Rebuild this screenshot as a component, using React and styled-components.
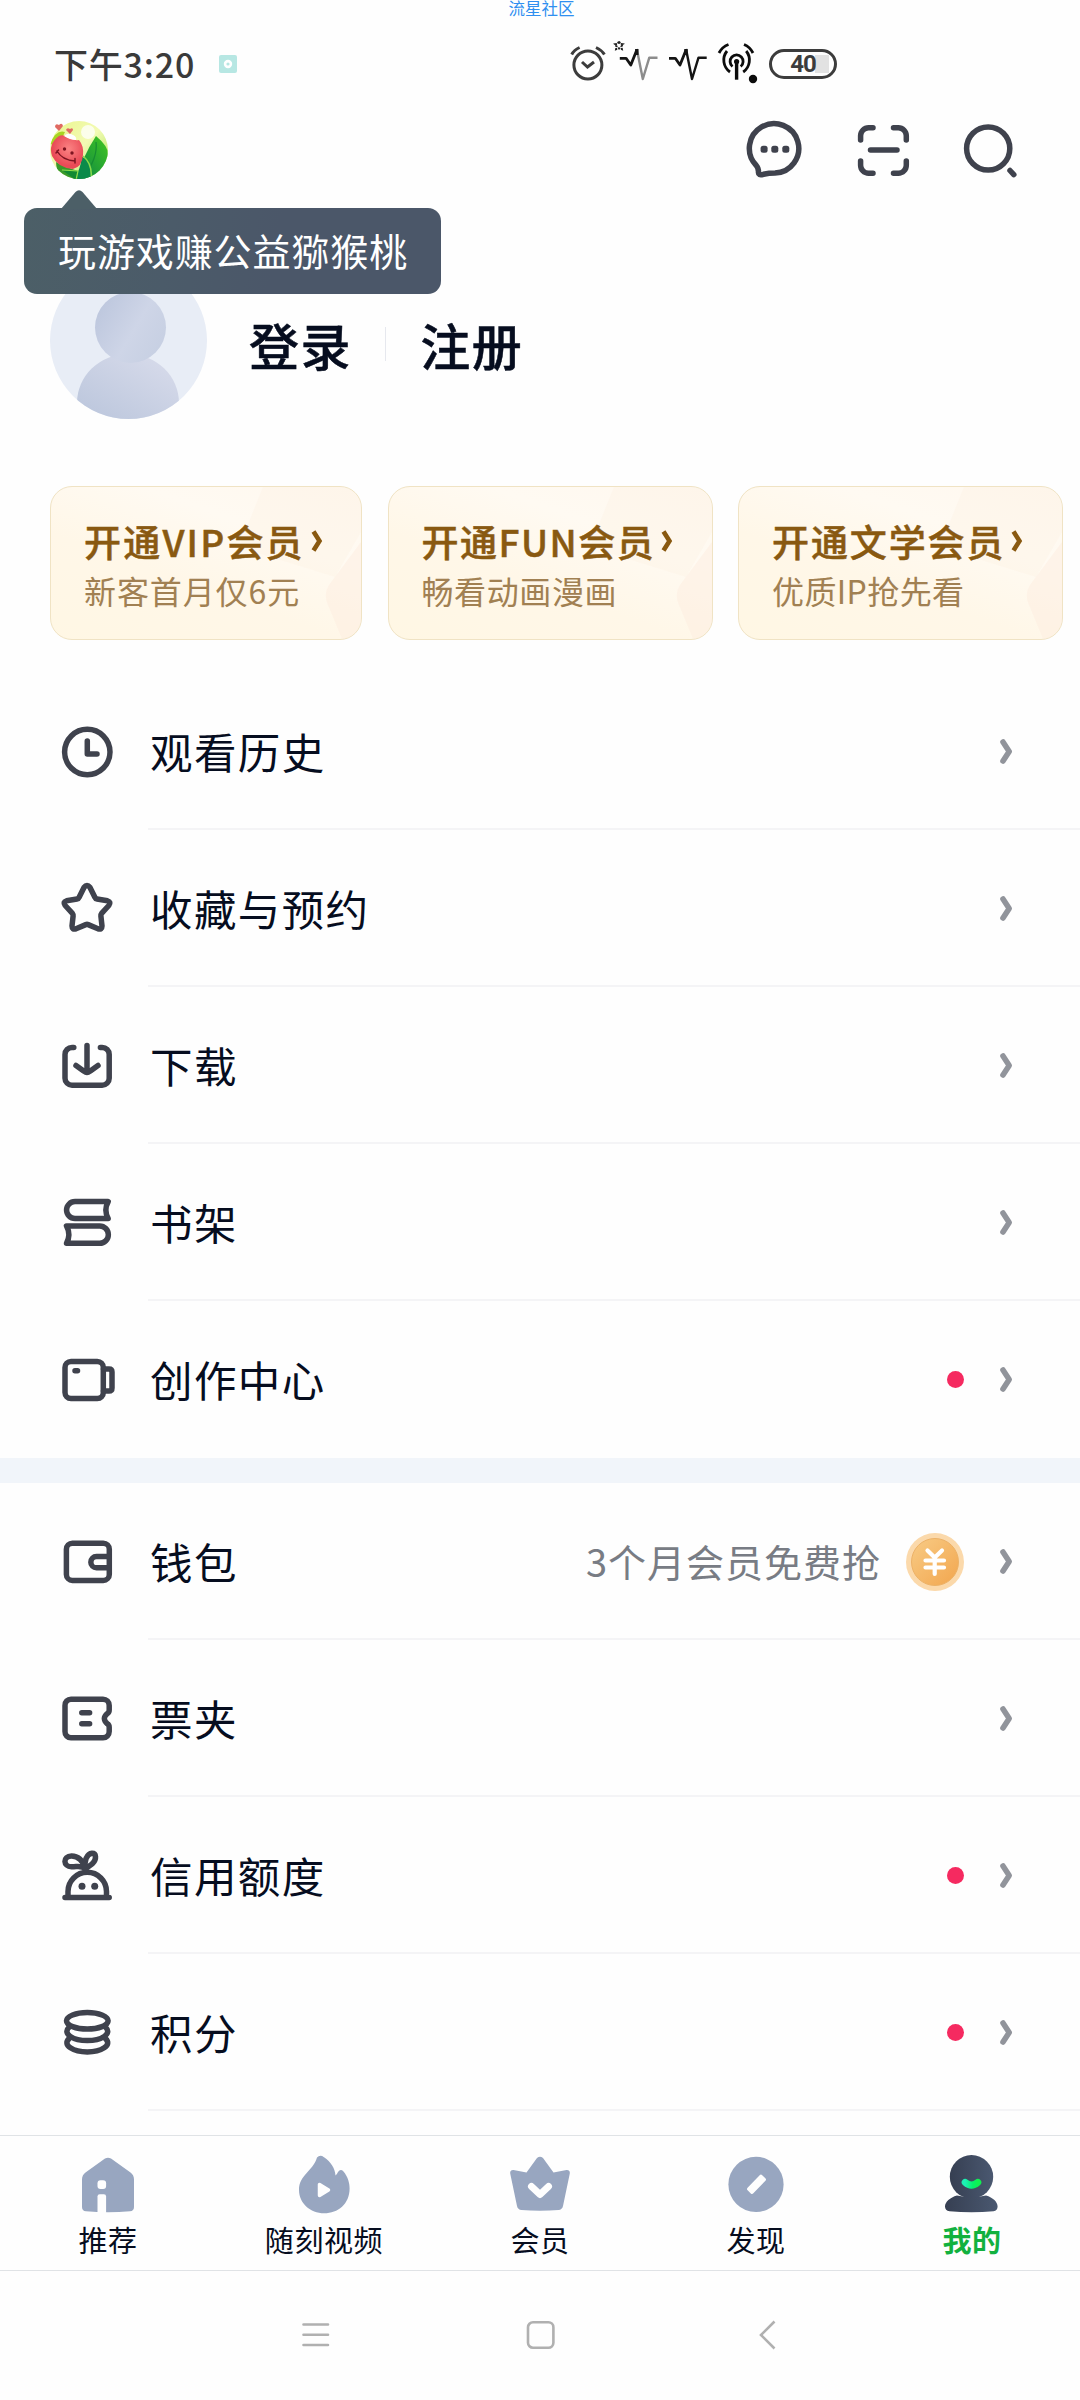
import React from 'react'
import styled, { createGlobalStyle } from 'styled-components'

const GlobalStyle = createGlobalStyle`
    * {
        box-sizing: border-box;
    }
    body {
        margin: 0;
        background: #fefefe;
        font-family: 'Noto Sans CJK SC', 'Noto Sans', sans-serif;
    }
    svg {
        display: block;
        flex-shrink: 0;
        overflow: visible;
    }
`
const Page = styled.div`
    position: relative;
    display: flex;
    flex-direction: column;
    width: 1080px;
    height: 2400px;
    overflow: hidden;
    background: #fefefe;
    color: #060d1f;
    white-space: nowrap;
`
const Watermark = styled.div`
    position: absolute;
    top: 0;
    left: 0;
    width: 1083px;
    text-align: center;
    font-size: 16.5px;
    line-height: 17px;
    color: #2f8ff0;
`
const StatusBar = styled.div`
    display: flex;
    align-items: center;
    height: 120px;
    padding: 8px 243px 0 54px;
`
const Clock = styled.div`
    width: 165px;
    padding-bottom: 2px;
    font-size: 34px;
    font-weight: 500;
    letter-spacing: 0.8px;
    color: #3a3a3a;
`
const StatusIcons = styled.div`
    display: flex;
    align-items: center;
    gap: 11px;
    margin-left: auto;
`
const Battery = styled.div`
    display: flex;
    align-items: center;
    justify-content: center;
    width: 68px;
    height: 30px;
    border: 3px solid #3c3c3c;
    border-radius: 15px;
    font-family: Roboto, sans-serif;
    font-size: 24px;
    font-weight: 700;
    letter-spacing: -1px;
    color: #3c3c3c;
    background: linear-gradient(#e2e2e2, #e2e2e2) 43px 3px / 14px 18px no-repeat;
`
const Header = styled.div`
    position: relative;
    display: flex;
    align-items: center;
    justify-content: space-between;
    height: 60px;
    padding: 0 60px 0 50px;
`
const HeaderActions = styled.div`
    display: flex;
    gap: 47.5px;
`
const Tooltip = styled.div`
    position: absolute;
    z-index: 2;
    top: 88px;
    left: 24px;
    width: 417px;
    height: 86px;
    padding-left: 34px;
    border-radius: 13px;
    background: linear-gradient(100deg, #4c5f67 0%, #4b5b69 35%, #4b5769 60%);
    color: #fff;
    font-size: 38px;
    letter-spacing: 0.9px;
    line-height: 84px;
`
const TooltipArrow = styled.svg`
    position: absolute;
    top: -18px;
    left: 37px;
`
const Profile = styled.div`
    display: flex;
    height: 157px;
    margin: 82px 0 0 50px;
`
const ProfileLinks = styled.div`
    display: flex;
    align-items: center;
    padding: 7px 0 0 42px;
    font-size: 50px;
    font-weight: 500;
    letter-spacing: 1.6px;
    -webkit-text-stroke: 0.5px #060d1f;
`
const Separator = styled.div`
    width: 1px;
    height: 34px;
    margin: 0 34px 0 33px;
    background: #e6e8ee;
`
const Cards = styled.div`
    display: flex;
    gap: 25.5px;
    margin: 67px 0 0 50px;
`
const Card = styled.div`
    position: relative;
    flex-shrink: 0;
    width: ${ props => props.$width }px;
    height: 154px;
    padding: 32px 0 0 33px;
    border: 1px solid #f0e3c4;
    border-radius: 22px;
    overflow: hidden;
    background: linear-gradient(20deg, #fff7e4 0%, #fff7e8 40%, #fffaf2 70%, #fff8ef 100%);
`
const CardShade = styled.svg`
    position: absolute;
    top: 0;
    right: 0;
`
const CardTitle = styled.div`
    position: relative;
    display: flex;
    align-items: center;
    gap: ${ props => props.$gap }px;
    font-size: 37px;
    font-weight: 500;
    -webkit-text-stroke: 0.5px #895911;
    letter-spacing: ${ props => props.$spacing }px;
    line-height: 44px;
    color: #895911;
`
const CardText = styled.div`
    position: relative;
    margin-top: 7px;
    font-size: 32px;
    letter-spacing: ${ props => props.$spacing }px;
    line-height: 40px;
    color: #a18052;
`
const Menu = styled.div`
    flex: 1;
    min-height: 0;
    margin-top: 33px;
    overflow: hidden;
`
const MenuGroup = styled.div`
    & + & {
        border-top: 25px solid #f1f5fa;
    }
`
const MenuItem = styled.div`
    display: flex;
    align-items: center;
    height: 157px;
    padding-left: 57px;
`
const MenuBody = styled.div`
    display: flex;
    flex: 1;
    align-items: center;
    height: 157px;
    margin-left: 31px;
    padding: 2px 67px 0 2px;
    border-bottom: 2px solid ${ props => props.$last ? 'transparent' : '#f4f4f6' };
`
const MenuLabel = styled.div`
    margin-right: auto;
    padding-bottom: 3px;
    font-size: 42.5px;
    letter-spacing: 1.4px;
`
const MenuNote = styled.div`
    margin-right: 25px;
    padding-bottom: 3px;
    font-size: 38px;
    letter-spacing: 1px;
    color: #787c84;
`
const RedDot = styled.div`
    width: 17px;
    height: 17px;
    margin-right: 35px;
    border-radius: 50%;
    background: #f52a60;
`
const CoinIcon = styled.svg`
    margin-right: 35px;
`
const TabBar = styled.div`
    display: flex;
    height: 136px;
    border-top: 1px solid #e0e3e6;
    border-bottom: 1px solid #e0e3e6;
`
const Tab = styled.div`
    display: flex;
    flex: 1;
    flex-direction: column;
    align-items: center;
    padding-top: 19px;
    font-size: 29px;
    font-weight: ${ props => props.$active ? 700 : 400 };
    letter-spacing: 0.6px;
    line-height: 40px;
    color: ${ props => props.$active ? '#12b13f' : '#060d1f' };
`
const TabLabel = styled.div`
    margin-top: 4px;
`
const SystemNav = styled.div`
    display: flex;
    align-items: center;
    justify-content: center;
    gap: 197px;
    height: 129px;
    padding-bottom: 2px;
`

const Outline = ({ children }) => (
    <svg width="60" height="60" viewBox="0 0 60 60" fill="none" stroke="#3f424d" strokeWidth="5.5" strokeLinecap="round" strokeLinejoin="round">
        { children }
    </svg>
)

const icons = {
    history: (
        <Outline>
            <circle cx="30.3" cy="30" r="22.7" />
            <path d="M30.3 19V32H40" />
        </Outline>
    ),
    star: (
        <Outline>
            <path d="M27 8.5Q30 4.5 33 8.5L38 18.5Q38.5 19.8 40 20L50.5 21.8Q54.5 23 51.8 26.5L44.6 34.4Q43.7 35.5 43.9 37L45 47Q45 51 41 49.8L31.2 45.6Q30 45.1 28.8 45.6L19 49.8Q15 51 15 47L16.1 37Q16.3 35.5 15.4 34.4L8.2 26.5Q5.5 23 9.5 21.8L20 20Q21.5 19.8 22 18.5Z" />
        </Outline>
    ),
    download: (
        <Outline>
            <path d="M16.8 11.4H15a7 7 0 0 0-7 7V42.2a7 7 0 0 0 7 7H45.2a7 7 0 0 0 7-7V18.4a7 7 0 0 0-7-7H43.4" />
            <path d="M30 9.5V36M19 29.5L27 35.2Q30 37.6 33 35.2L41 29.5" />
        </Outline>
    ),
    books: (
        <Outline>
            <path d="M51.2 8.6H18a8.4 8.4 0 0 0 0 16.9H51.2Q46.5 17 51.2 8.6Z" />
            <path d="M9.5 33H42.7a8.4 8.4 0 0 1 0 17.3H9.5Q14.2 41.6 9.5 33Z" />
        </Outline>
    ),
    camera: (
        <Outline>
            <rect x="8" y="11.5" width="38.3" height="37" rx="6" />
            <path d="M18 20.8H20.5M46.5 19H52Q55 19 55 22V38Q55 41 52 41H46.5" />
        </Outline>
    ),
    wallet: (
        <Outline>
            <rect x="9.4" y="11.2" width="42.9" height="37.2" rx="6" />
            <path d="M52 24.5H39.5a5.6 5.6 0 0 0 0 11.3H52" />
        </Outline>
    ),
    ticket: (
        <Outline>
            <path d="M14 10.2H46a6.2 6.2 0 0 1 6.2 6.2V21Q52.2 23.5 50.2 24.6Q44.5 29.5 50.2 34.6Q52.2 35.8 52.2 38.2V42.6a6.2 6.2 0 0 1-6.2 6.2H14a6 6 0 0 1-6-6.2V16.4a6 6 0 0 1 6-6.2Z" />
            <path d="M24.8 23.8H32.6M24.8 34.8H32.6" />
        </Outline>
    ),
    credit: (
        <Outline>
            <path d="M11 51V45.6a19.2 19.2 0 0 1 38.5 0V51M8 51.5H52.2" />
            <path d="M28.5 22.5C25.5 14 20.5 10 14.5 10.1C5.5 10.5 6 20.5 14.5 20.8C20 21 23.5 19 28.5 22.5Z" />
            <path d="M28.5 23.5C26.5 15 30 7.6 35 7.2C39.5 7.2 39.5 13 36 17C33 20 31 20 28.5 23.5Z" />
            <g fill="#3f424d" stroke="none">
                <circle cx="25" cy="40.2" r="3.5" />
                <circle cx="37.7" cy="40.2" r="3.5" />
            </g>
        </Outline>
    ),
    points: (
        <Outline>
            <ellipse cx="30.3" cy="17.8" rx="20.8" ry="8.3" />
            <path d="M12.3 24C4.5 31 17 37.6 30.3 37.6C43.6 37.6 56.1 31 48.3 24" />
            <path d="M12.3 35.4C4.5 42.4 17 49 30.3 49C43.6 49 56.1 42.4 48.3 35.4" />
        </Outline>
    )
}

const TabIcon = ({ name }) => {
    const shapes = {
        home: (
            <>
                <path d="M29 3.5Q32 1.8 35 3.5L54.5 17.5Q58 20 58 24.5V52Q58 56 54 56.3Q32 58 10 56.3Q6 56 6 52V24.5Q6 20 9.5 17.5Z" />
                <rect x="21.5" y="25.3" width="8.6" height="8.6" rx="3" fill="#fefefe" />
                <path d="M21.5 58V41.5Q21.5 39.3 23.7 39.3H27.9Q30.1 39.3 30.1 41.5V58Z" fill="#fefefe" />
            </>
        ),
        flame: (
            <>
                <path d="M25 2.5Q28 -.8 32 2.2C39 7 43 13 43.5 20.5Q44.8 19.8 46 17Q48.5 13.3 51.5 16.5C56 22 57.6 28 57.6 33.5C57.6 49 46 58.3 32.3 58.3C18 58.3 7 48 7 35C7 20 21 16 25 2.5Z" />
                <path d="M27.5 29.5V40.5L36.5 35Z" fill="#fefefe" stroke="#fefefe" strokeWidth="3.5" strokeLinejoin="round" />
            </>
        ),
        crown: (
            <>
                <path d="M29 3Q32 .3 35 3L45.5 17.5L58.5 14.9Q62.3 14.7 61.8 18.5L55 51Q54.2 54.7 50.5 55Q32 56.5 13.5 55Q9.8 54.7 9 51L2.2 18.5Q1.7 14.7 5.5 14.9L18.5 17.5Z" />
                <path d="M23.5 31.5L32 39.5L40.5 31.5" fill="none" stroke="#fefefe" strokeWidth="7" strokeLinejoin="round" strokeLinecap="round" />
            </>
        ),
        compass: (
            <>
                <circle cx="32" cy="29.4" r="27.6" />
                <rect x="22" y="25.3" width="21" height="8" rx="1.8" fill="#fefefe" transform="rotate(-46 32.5 29.3)" />
            </>
        ),
        mine: (
            <>
                <g fill="url(#mineBody)">
                    <circle cx="31.5" cy="21.8" r="21.7" />
                    <path d="M17 40.5Q31.5 44 46 40.5C53 42.5 57.6 47 57.6 51.5Q57.6 55.5 53.5 56.3Q31.5 58.3 9.5 56.3Q5 55.5 5 51.5C5 47 10 42.5 17 40.5Z" />
                </g>
                <path d="M25.2 27.4Q31.5 33 37.8 27.4" fill="none" stroke="url(#mineSmile)" strokeWidth="7" strokeLinecap="round" />
                <defs>
                    <linearGradient id="mineBody" x1="0" x2="1">
                        <stop offset="0" stopColor="#363f52" />
                        <stop offset="1" stopColor="#4a5870" />
                    </linearGradient>
                    <linearGradient id="mineSmile" x1="0" x2="1">
                        <stop offset="0" stopColor="#1df0b4" />
                        <stop offset="0.6" stopColor="#05f06a" />
                        <stop offset="1" stopColor="#10f050" />
                    </linearGradient>
                </defs>
            </>
        )
    }
    return (
        <svg width="64" height="60" viewBox="0 0 64 60" fill="#98a6c0">
            { shapes[name] }
        </svg>
    )
}

const Pulse = ({ faded }) => (
    <svg width="38" height="44" fill="none" stroke="#141414" strokeWidth="2.4" strokeLinejoin="round">
        <path d="M0 16.3H6.3L11 23L17 8" strokeWidth="2.8" />
        <path d="M17 7L23 37L29.5 15.7H37.7" stroke={ faded ? '#8c8c8c' : '#141414' } />
        <path d="M17 7V13" strokeWidth="3.4" />
    </svg>
)

const Kiwi = () => (
    <svg width="58" height="60" viewBox="0 0 58 60">
        <defs>
            <clipPath id="kiwiClip"><circle cx="29" cy="30" r="29" /></clipPath>
            <linearGradient id="kiwiSky" x1="0" y1="0" x2="1" y2="1">
                <stop offset="0" stopColor="#e9f58a" />
                <stop offset="0.5" stopColor="#f3fbb4" />
                <stop offset="1" stopColor="#9fe04c" />
            </linearGradient>
            <linearGradient id="kiwiLeaf" x1="0" y1="1" x2="1" y2="0">
                <stop offset="0" stopColor="#078048" />
                <stop offset="1" stopColor="#43c81f" />
            </linearGradient>
            <radialGradient id="kiwiBody" cx="0.55" cy="0.4">
                <stop offset="0" stopColor="#fb8383" />
                <stop offset="1" stopColor="#e94b57" />
            </radialGradient>
        </defs>
        <g clipPath="url(#kiwiClip)">
            <rect width="58" height="60" fill="url(#kiwiSky)" />
            <circle cx="38" cy="12" r="7" fill="#fff" opacity="0.75" />
            <path d="M0 24Q6 9 15 12L8 26Z" fill="#a7d522" />
            <path d="M46 16Q58 26 58 34V60H27Q31 39 46 16Z" fill="url(#kiwiLeaf)" />
            <path d="M46 22Q48 38 34 56" fill="none" stroke="#168c32" strokeWidth="1.2" />
            <path d="M31 36Q44 42 41 60H22Q32 50 31 36Z" fill="#0a8a4a" />
            <path d="M33 36Q43 44 41 60" fill="none" stroke="#86da4b" strokeWidth="1.6" />
            <path d="M6 42Q18 48 28 51L27 60H12Q6 50 6 42Z" fill="#39992a" />
            <path d="M12 50L28 51L26 60" fill="#118a32" stroke="#91df4b" strokeWidth="1.2" />
        </g>
        <path d="M9 16Q13 14 17 17Q23 21 29 20Q34 26 33 35Q32 47 23 49Q8 48 2 36Q-2 24 9 16Z" fill="url(#kiwiBody)" />
        <path d="M14 16Q18 12 23 15Q27 17 26 20Q20 20 14 16Z" fill="#fff" />
        <path d="M7 31Q12 40 25 41M8.5 30L6 33M25 38.5V43" fill="none" stroke="#7d1420" strokeWidth="1.5" strokeLinecap="round" />
        <circle cx="14.5" cy="29" r="1.7" fill="#7d1420" />
        <circle cx="22" cy="33" r="1.7" fill="#7d1420" />
        <path d="M9 11L5 7Q5 3 9 5Q12 2 13 6ZM20 14L16 10Q17 7 20 9Q23 7 23 10Z" fill="#e06a62" />
    </svg>
)

const Avatar = () => (
    <svg width="157" height="157" viewBox="0 0 157 157">
        <defs>
            <clipPath id="avatarClip"><circle cx="78.5" cy="78.5" r="78.5" /></clipPath>
            <linearGradient id="avatarHead" x1="0" y1="0.2" x2="1" y2="0.8">
                <stop offset="0" stopColor="#bcc6dd" />
                <stop offset="0.55" stopColor="#ced5e7" />
                <stop offset="1" stopColor="#c6cfe2" />
            </linearGradient>
            <linearGradient id="avatarBody" x1="0.2" y1="0.9" x2="0.75" y2="0">
                <stop offset="0" stopColor="#b7c3da" />
                <stop offset="1" stopColor="#d6daea" />
            </linearGradient>
        </defs>
        <g clipPath="url(#avatarClip)">
            <rect width="157" height="157" fill="#e8edf6" />
            <ellipse cx="78" cy="141" rx="51" ry="49" fill="url(#avatarBody)" />
            <circle cx="80.5" cy="65.5" r="35.5" fill="url(#avatarHead)" />
        </g>
    </svg>
)

const Coin = () => (
    <CoinIcon width="58" height="58" viewBox="0 0 58 58">
        <defs>
            <linearGradient id="coinFace" x1="0" y1="0" x2="1" y2="1">
                <stop offset="0" stopColor="#f8cb85" />
                <stop offset="1" stopColor="#f2a64e" />
            </linearGradient>
        </defs>
        <circle cx="29" cy="29" r="29" fill="#fbd9ab" />
        <circle cx="29" cy="29" r="23.5" fill="url(#coinFace)" stroke="#edb267" strokeWidth="1" />
        <path d="M21.5 17.5L28.7 24.5L36 17.5M19.5 27.5H38M19.5 34.5H38M28.7 25V41" fill="none" stroke="#fff" strokeWidth="4.2" strokeLinecap="round" />
    </CoinIcon>
)

const cards = [
    { title: '开通VIP会员', text: '新客首月仅6元', width: 312, spacing: 2.2, gap: 7, textSpacing: 0.9 },
    { title: '开通FUN会员', text: '畅看动画漫画', width: 325, spacing: 1.5, gap: 7, textSpacing: 0.6 },
    { title: '开通文学会员', text: '优质IP抢先看', width: 325, spacing: 1.9, gap: 7, textSpacing: 0.4 }
]

const menuGroups = [
    [
        { icon: 'history', label: '观看历史' },
        { icon: 'star', label: '收藏与预约' },
        { icon: 'download', label: '下载' },
        { icon: 'books', label: '书架' },
        { icon: 'camera', label: '创作中心', dot: true }
    ],
    [
        { icon: 'wallet', label: '钱包', note: '3个月会员免费抢' },
        { icon: 'ticket', label: '票夹' },
        { icon: 'credit', label: '信用额度', dot: true },
        { icon: 'points', label: '积分', dot: true }
    ]
]

const tabs = [
    { icon: 'home', label: '推荐' },
    { icon: 'flame', label: '随刻视频' },
    { icon: 'crown', label: '会员' },
    { icon: 'compass', label: '发现' },
    { icon: 'mine', label: '我的', active: true }
]

export default function App() {
    return (
        <Page>
            <GlobalStyle />
            <Watermark>流星社区</Watermark>
            <StatusBar>
                <Clock>下午3:20</Clock>
                <svg width="18" height="18">
                    <rect width="18" height="18" rx="2" fill="#b7e7e3" />
                    <circle cx="9" cy="9" r="2.9" fill="none" stroke="#fff" strokeWidth="2.6" />
                </svg>
                <StatusIcons>
                    <svg width="32" height="44" fill="none" stroke="#3c3c3c" strokeWidth="3">
                        <circle cx="18.9" cy="23" r="14" />
                        <path d="M13 20L18.5 25L25 20" />
                        <path d="M2.7 12.5Q5 8 10.6 5.5M27 5.5Q32.5 8 35.4 12.5" />
                    </svg>
                    <svg width="46" height="44">
                        <path d="M7 -.5L8.3 1.8L11 2.2L9.4 4.4L9.9 7.2L7 6.2L4.1 7.2L4.6 4.4L3 2.2L5.7 1.8Z" fill="none" stroke="#222" strokeWidth="2" strokeDasharray="2.2 1" />
                        <g transform="translate(7.8 0)"><Pulse faded /></g>
                    </svg>
                    <Pulse />
                    <svg width="40" height="44" fill="none" stroke="#0c0c0c" strokeWidth="2.8">
                        <path d="M18.6 20V37.7" strokeWidth="3.4" />
                        <path d="M14.5 24.5A6.5 6.5 0 1 1 22.7 24.5" />
                        <path d="M12 30A14.5 14.5 0 0 1 9 9M25.2 30A14.5 14.5 0 0 0 28.2 9" />
                        <path d="M1 11Q4 5 10.5 2.5M26 2.5Q32 5 35 11" />
                        <circle cx="18.6" cy="19.5" r="2.6" fill="#0c0c0c" stroke="none" />
                        <circle cx="35" cy="37" r="4.2" fill="#0c0c0c" stroke="none" />
                    </svg>
                    <Battery>40</Battery>
                </StatusIcons>
            </StatusBar>
            <Header>
                <Kiwi />
                <HeaderActions>
                    <Outline>
                        <path d="M11.3 45.5A24.7 24.7 0 1 1 30 53Q24 53 18.5 54.3Q13 56 13.5 52Q13.5 48 11.3 45.5Z" />
                        <g fill="#3f424d" stroke="none">
                            <rect x="15.6" y="25.8" width="7" height="7" rx="2.5" />
                            <rect x="26.3" y="25.8" width="7" height="7" rx="2.5" />
                            <rect x="37.3" y="25.8" width="7" height="7" rx="2.5" />
                        </g>
                    </Outline>
                    <Outline>
                        <path d="M20 7.8H15.6a8 8 0 0 0-8 8V20M40.5 7.8H45.3a8 8 0 0 1 8 8V20M20 53.2H15.6a8 8 0 0 1-8-8V41M40.5 53.2H45.3a8 8 0 0 0 8-8V41M17.5 30H44" />
                    </Outline>
                    <Outline>
                        <circle cx="28.2" cy="28.5" r="21.6" />
                        <path d="M50 50.5L53.8 54.6" />
                    </Outline>
                </HeaderActions>
                <Tooltip>
                    <TooltipArrow width="36" height="19">
                        <path d="M0 19L14.5 2Q18 -1.5 21.5 2L36 19Z" fill="#4c5f67" />
                    </TooltipArrow>
                    玩游戏赚公益猕猴桃
                </Tooltip>
            </Header>
            <Profile>
                <Avatar />
                <ProfileLinks>
                    登录
                    <Separator />
                    注册
                </ProfileLinks>
            </Profile>
            <Cards>
                { cards.map(card => (
                    <Card key={ card.title } $width={ card.width }>
                        <CardShade width="130" height="154" viewBox="0 0 130 154">
                            <path d="M8 60L32 0H130V45L104 90Z" fill="#fdf1e2" opacity="0.35" />
                            <path d="M130 55L98 98Q92 107 97 118L112 154H130Z" fill="#fcecdd" opacity="0.45" />
                        </CardShade>
                        <CardTitle $spacing={ card.spacing } $gap={ card.gap }>
                            { card.title }
                            <svg width="10" height="22" fill="none" stroke="#895911" strokeWidth="4.6">
                                <path d="M1.5 1.5L7.5 11L1.5 20.5" />
                            </svg>
                        </CardTitle>
                        <CardText $spacing={ card.textSpacing }>{ card.text }</CardText>
                    </Card>
                )) }
            </Cards>
            <Menu>
                { menuGroups.map((group, index) => (
                    <MenuGroup key={ index }>
                        { group.map((item, i) => (
                            <MenuItem key={ item.label }>
                                { icons[item.icon] }
                                <MenuBody $last={ index === 0 && i === group.length - 1 }>
                                    <MenuLabel>{ item.label }</MenuLabel>
                                    { item.note && <MenuNote>{ item.note }</MenuNote> }
                                    { item.note && <Coin /> }
                                    { item.dot && <RedDot /> }
                                    <svg width="14" height="26" fill="none" stroke="#91949b" strokeWidth="5.6" strokeLinecap="round" strokeLinejoin="round">
                                        <path d="M4 3L10.2 12.5L4 22" />
                                    </svg>
                                </MenuBody>
                            </MenuItem>
                        )) }
                    </MenuGroup>
                )) }
            </Menu>
            <TabBar>
                { tabs.map(tab => (
                    <Tab key={ tab.label } $active={ tab.active }>
                        <TabIcon name={ tab.icon } />
                        <TabLabel>{ tab.label }</TabLabel>
                    </Tab>
                )) }
            </TabBar>
            <SystemNav>
                <svg width="28" height="28" fill="none" stroke="#b0b0b0" strokeWidth="2.6" strokeLinecap="round">
                    <path d="M2.5 3.5H27M2.5 13.8H27M2.5 24H27" />
                </svg>
                <svg width="28" height="28" fill="none" stroke="#b0b0b0" strokeWidth="2.6">
                    <rect x="2" y="1.3" width="25.4" height="25.4" rx="5" />
                </svg>
                <svg width="28" height="28" fill="none" stroke="#b0b0b0" strokeWidth="2.6">
                    <path d="M23.5 .5L10 14L23.5 27.5" />
                </svg>
            </SystemNav>
        </Page>
    )
}
